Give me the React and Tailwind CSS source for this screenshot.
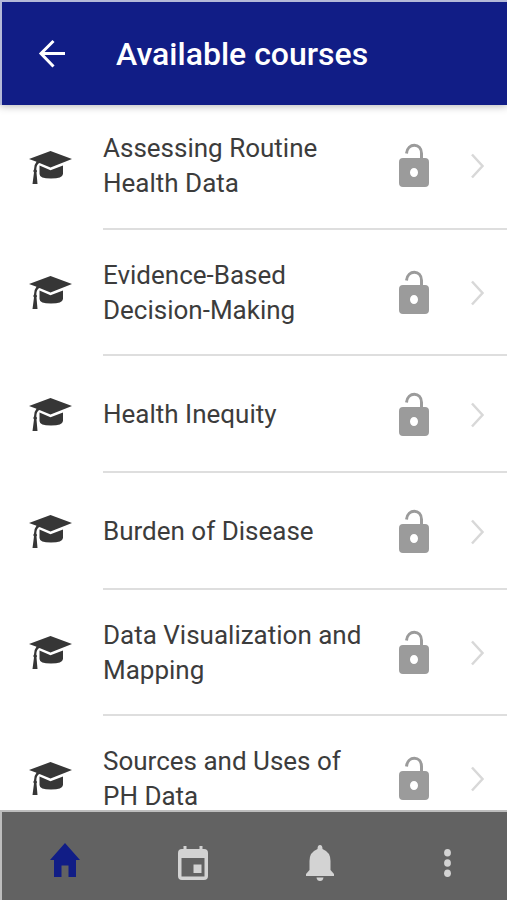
import React from 'react';

const courses = [
  'Assessing Routine Health Data',
  'Evidence-Based Decision-Making',
  'Health Inequity',
  'Burden of Disease',
  'Data Visualization and Mapping',
  'Sources and Uses of PH Data',
];

const BackIcon = () => (
  <svg className="h-8 w-8" viewBox="0 0 32 32" fill="none" stroke="currentColor" strokeWidth="3">
    <path d="M29 15.500H5M17.500 3L5 15.500l12.500 13" />
  </svg>
);

const CapIcon = () => (
  <svg className="h-[34px] w-[43px] shrink-0" viewBox="0 0 43 34" fill="currentColor">
    <path d="M21.500 0L43 8 21.500 16.500 10.500 12Q7.500 13 7.300 18.500Q8.800 20 7.500 21.500L8.500 33H3.500L5 21.500Q3.500 20 5 18.500Q5 13.500 7.500 10.800L0 8z" />
    <path d="M10.500 14.500L21.500 19.300 34 14.500V23Q33.500 27.500 22 27.500Q10.500 27.500 10.500 23z" />
  </svg>
);

const UnlockIcon = () => (
  <svg className="h-[46px] w-[30px] shrink-0" viewBox="0 0 30 46">
    <path d="M7.500 10.500C8.500 -0.500 22.500 -0.500 22.500 10.500V17" fill="none" stroke="currentColor" strokeWidth="3" />
    <path
      fillRule="evenodd"
      fill="currentColor"
      d="M4 15H26Q30 15 30 19V40Q30 44 26 44H4Q0 44 0 40V19Q0 15 4 15zM15 25a4 4.500 0 1 0 0 9a4 4.500 0 1 0 0-9z"
    />
  </svg>
);

const ChevronIcon = () => (
  <svg className="h-[26px] w-[14px] shrink-0" viewBox="0 0 14 26" fill="none" stroke="currentColor" strokeWidth="2.500">
    <path d="M1 1.500L11.500 13 1 24.500" />
  </svg>
);

const HomeIcon = () => (
  <svg className="h-10 w-8" viewBox="0 0 32 40" fill="currentColor">
    <path d="M16 0L31 17H27V34H19.500V22.500H12.500V34H5V17H1z" />
  </svg>
);

const CalendarIcon = () => (
  <svg className="h-[34px] w-[30px]" viewBox="0 0 30 34" fill="currentColor">
    <path
      fillRule="evenodd"
      d="M5.500 0H8.500V3H21.500V0H24.500V3H26Q30 3 30 7V30Q30 34 26 34H4Q0 34 0 30V7Q0 3 4 3H5.500zM3.500 12V30.500H26.500V12z"
    />
    <path d="M15.500 18.500H23.500V27H15.500z" />
  </svg>
);

const BellIcon = () => (
  <svg className="h-9 w-7" viewBox="0 0 28 36" fill="currentColor">
    <path d="M14 0Q16.500 0 16.500 4Q24.500 7 24.500 16V25L28 29V31H0V29L3.500 25V16Q3.500 7 11.500 4Q11.500 0 14 0z" />
    <path d="M10.500 32.500H17.500Q17 36 14 36Q11 36 10.500 32.500z" />
  </svg>
);

const MoreIcon = () => (
  <svg className="h-7 w-[7px]" viewBox="0 0 7 28" fill="currentColor">
    <ellipse cx="3.500" cy="3.800" rx="3.400" ry="3.800" />
    <ellipse cx="3.500" cy="14" rx="3.400" ry="3.800" />
    <ellipse cx="3.500" cy="24.200" rx="3.400" ry="3.800" />
  </svg>
);

const App = () => {
  return (
    <div className="flex h-screen flex-col overflow-hidden bg-white font-['Roboto',sans-serif]">
      {/* header */}
      <header className="z-10 flex h-[105px] shrink-0 items-center border-t-2 border-l-2 border-[#b4b9d8] bg-[#111d86] pl-[34px] text-white shadow-[0_1px_8px_rgba(0,0,0,0.3)]">
        <button aria-label="Back" className="flex">
          <BackIcon />
        </button>
        <h1 className="ml-12 text-[32px] font-medium">Available courses</h1>
      </header>

      {/* course list */}
      <main className="min-h-0 grow overflow-hidden">
        <ul>
          {courses.map((course) => (
            <li key={course} className="group">
              <a href="#course" className="flex items-stretch">
                <span className="flex w-[103px] shrink-0 items-center pl-[29px] text-[#363636]">
                  <CapIcon />
                </span>
                <span className="flex min-h-[117px] grow items-center border-b-2 border-[#dedede] pt-7 pb-[26px] group-first:pt-[26px] group-first:pb-[27px]">
                  <span className="w-0 grow pr-7 text-[26px] leading-[35px] text-[#3c3c3c]">{course}</span>
                  <span className="text-[#9b9b9b]">
                    <UnlockIcon />
                  </span>
                  <span className="mr-[22px] ml-[42px] text-[#d8d8d8]">
                    <ChevronIcon />
                  </span>
                </span>
              </a>
            </li>
          ))}
        </ul>
      </main>

      {/* bottom tabs */}
      <nav className="z-10 flex h-[90px] shrink-0 items-center justify-between border-t-2 border-l-2 border-[#bdbdbd] bg-[#626262] pt-3.5 pr-[43px] pl-[47px] text-[#d3d3d3]">
        <button aria-label="Home" className="flex w-8 justify-center text-[#111d86]">
          <HomeIcon />
        </button>
        <button aria-label="Calendar" className="flex w-8 justify-center">
          <CalendarIcon />
        </button>
        <button aria-label="Notifications" className="flex w-8 justify-center">
          <BellIcon />
        </button>
        <button aria-label="More" className="flex w-8 justify-center">
          <MoreIcon />
        </button>
      </nav>
    </div>
  );
};

export default App;
